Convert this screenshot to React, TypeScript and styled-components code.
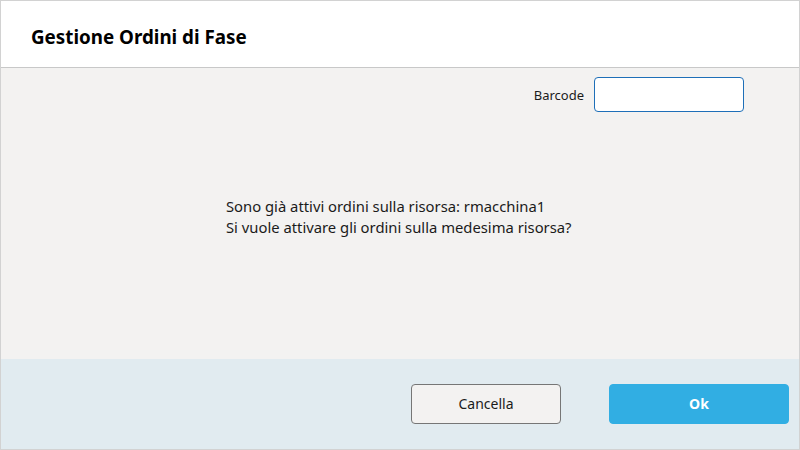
import styled, { createGlobalStyle } from "styled-components";

const GlobalStyle = createGlobalStyle`
  html, body {
    margin: 0;
    padding: 0;
    background: #ffffff;
  }
  body {
    font-family: "Noto Sans", "Open Sans", "Liberation Sans", sans-serif;
  }
  * {
    box-sizing: border-box;
  }
`;

export default function App() {
  return (
    <>
      <GlobalStyle />
      <Dialog>
        <Header>
          <Title>Gestione Ordini di Fase</Title>
        </Header>
        <Body>
          <BarcodeRow>
            <FieldLabel htmlFor="barcode">Barcode</FieldLabel>
            <BarcodeInput id="barcode" type="text" />
          </BarcodeRow>
          <Message>
            Sono già attivi ordini sulla risorsa: rmacchina1
            <br />
            Si vuole attivare gli ordini sulla medesima risorsa?
          </Message>
        </Body>
        <Footer>
          <Button>Cancella</Button>
          <Button primary>Ok</Button>
        </Footer>
      </Dialog>
    </>
  );
}

const Dialog = styled.div`
  width: 800px;
  height: 450px;
  border: 1px solid #d2d2d2;
  display: flex;
  flex-direction: column;
  background: #f3f2f1;
`;

const Header = styled.header`
  height: 67px;
  flex: none;
  background: #ffffff;
  border-bottom: 1px solid #c8c8c8;
  display: flex;
  align-items: center;
  padding: 5px 0 0 30px;
`;

const Title = styled.h1`
  margin: 0;
  font-size: 18.8px;
  font-weight: 700;
  color: #000000;
`;

const Body = styled.main`
  flex: 1;
  display: flex;
  flex-direction: column;
  padding: 9px 55px 0 225px;
`;

const BarcodeRow = styled.div`
  display: flex;
  align-items: center;
  justify-content: flex-end;
  gap: 10px;
`;

const FieldLabel = styled.label`
  font-size: 13px;
  color: #1b1b1b;
`;

const BarcodeInput = styled.input`
  width: 150px;
  height: 35px;
  border: 1px solid #1e6fb8;
  border-radius: 4px;
  background: #ffffff;
  outline: none;
  font: inherit;
  padding: 0 8px;
`;

const Message = styled.p`
  margin: 84px 0 0;
  font-size: 14.8px;
  line-height: 21px;
  color: #1b1b1b;
`;

const Footer = styled.footer`
  height: 90px;
  flex: none;
  background: #e1ebf0;
  display: flex;
  align-items: center;
  justify-content: flex-end;
  gap: 48px;
  padding: 0 10px 1px 0;
`;

const Button = styled.button<{ primary?: boolean }>`
  height: 40px;
  width: ${({ primary }) => (primary ? "180px" : "150px")};
  border-radius: 4px;
  font-family: inherit;
  font-size: 14px;
  cursor: pointer;
  border: 1px solid ${({ primary }) => (primary ? "#31aee3" : "#767676")};
  background: ${({ primary }) => (primary ? "#31aee3" : "#f3f2f1")};
  color: ${({ primary }) => (primary ? "#ffffff" : "#1b1b1b")};
  font-weight: ${({ primary }) => (primary ? 700 : 400)};
`;
